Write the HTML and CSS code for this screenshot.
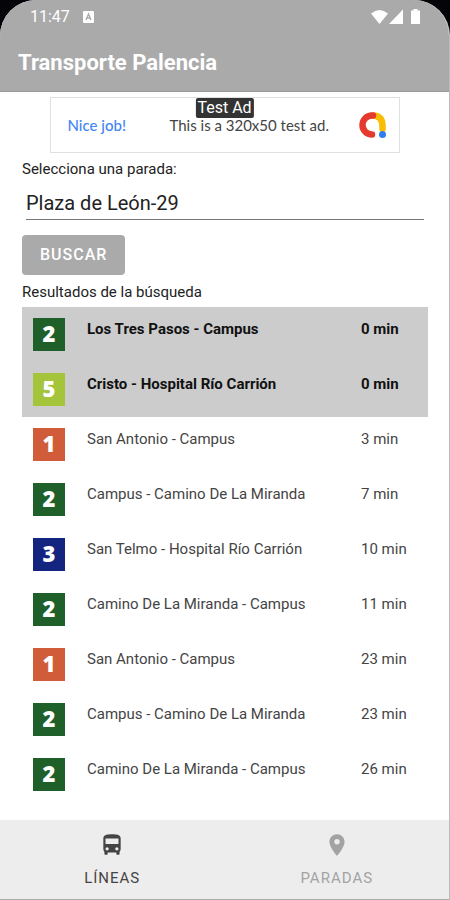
FILE: index.html
```html
<!DOCTYPE html>
<html lang="es">
<head>
<meta charset="utf-8">
<meta name="viewport" content="width=device-width, initial-scale=1">
<title>Transporte Palencia</title>
<link rel="stylesheet" href="styles.css">
</head>
<body>
<div class="app">
  <header class="header">
    <div class="status">
      <span class="clock">11:47</span>
      <svg class="notice" width="11" height="12" viewBox="0 0 11 12"><rect width="11" height="12" rx="1" fill="#fff"/><path d="M3 9l2.500-6L8 9M4 7h3" fill="none" stroke="#aaa" stroke-width="1.300"/></svg>
      <svg class="signals" width="50" height="16" viewBox="0 0 50 16" fill="#fff"><path d="M0 4.500Q8.500-2.500 17 4.500L8.500 15z"/><path d="M32 .5V15H18z"/><path d="M40 1.500h2.500V0h4v1.500H49V15h-9z"/></svg>
    </div>
    <h1 class="title">Transporte Palencia</h1>
  </header>
  <aside class="ad">
    <span class="ad-tag">Test Ad</span>
    <span class="ad-lead">Nice job!</span>
    <span class="ad-text">This is a 320x50 test ad.</span>
    <svg class="ad-logo" width="28" height="28" viewBox="0 0 28 28" fill="none" stroke-width="6.500" stroke-linecap="round"><path d="M13.500 4.500Q23.500 4.500 23.500 15V18" stroke="#fbbc04"/><path d="M14 4.500H13A9.500 9.500 0 0 0 13 23.500" stroke="#e53b2e"/><circle cx="23.500" cy="23.500" r="3.500" fill="#307df0"/></svg>
  </aside>
  <main class="main">
    <form class="search">
      <label class="label" for="stop">Selecciona una parada:</label>
      <input class="field" id="stop" type="text" value="Plaza de León-29">
      <button class="submit" type="button">BUSCAR</button>
    </form>
    <h2 class="label" id="results">Resultados de la búsqueda</h2>
    <table class="results" aria-labelledby="results">
      <tbody>
        <tr class="now"><td class="line"><span class="badge green">2</span></td><td>Los Tres Pasos - Campus</td><td class="time">0 min</td></tr>
        <tr class="now"><td class="line"><span class="badge lime">5</span></td><td>Cristo - Hospital Río Carrión</td><td class="time">0 min</td></tr>
        <tr><td class="line"><span class="badge orange">1</span></td><td>San Antonio - Campus</td><td class="time">3 min</td></tr>
        <tr><td class="line"><span class="badge green">2</span></td><td>Campus - Camino De La Miranda</td><td class="time">7 min</td></tr>
        <tr><td class="line"><span class="badge blue">3</span></td><td>San Telmo - Hospital Río Carrión</td><td class="time">10 min</td></tr>
        <tr><td class="line"><span class="badge green">2</span></td><td>Camino De La Miranda - Campus</td><td class="time">11 min</td></tr>
        <tr><td class="line"><span class="badge orange">1</span></td><td>San Antonio - Campus</td><td class="time">23 min</td></tr>
        <tr><td class="line"><span class="badge green">2</span></td><td>Campus - Camino De La Miranda</td><td class="time">23 min</td></tr>
        <tr><td class="line"><span class="badge green">2</span></td><td>Camino De La Miranda - Campus</td><td class="time">26 min</td></tr>
      </tbody>
    </table>
  </main>
  <nav class="tabs">
    <a class="tab active" href="#lineas">
      <svg width="26" height="26" viewBox="0 0 24 24" fill="currentColor"><path d="M4 16c0 .88.39 1.670 1 2.220V20c0 .55.45 1 1 1h1c.55 0 1-.45 1-1v-1h8v1c0 .55.45 1 1 1h1c.55 0 1-.45 1-1v-1.780c.61-.55 1-1.340 1-2.220V6c0-3.500-3.580-4-8-4s-8 .5-8 4v10zm3.500 1c-.83 0-1.500-.67-1.500-1.500S6.670 14 7.500 14s1.500.67 1.500 1.500S8.330 17 7.500 17zm9 0c-.83 0-1.500-.67-1.500-1.500s.67-1.500 1.500-1.500 1.500.67 1.500 1.500-.67 1.500-1.500 1.500zm1.500-6H6V6h12v5z"/></svg>
      <span>LÍNEAS</span>
    </a>
    <a class="tab" href="#paradas">
      <svg width="26" height="26" viewBox="0 0 24 24" fill="currentColor"><path d="M12 2C8.130 2 5 5.130 5 9c0 5.250 7 13 7 13s7-7.750 7-13c0-3.870-3.130-7-7-7zm0 9.500a2.500 2.500 0 0 1 0-5 2.500 2.500 0 0 1 0 5z"/></svg>
      <span>PARADAS</span>
    </a>
  </nav>
</div>
</body>
</html>
```
FILE: styles.css
```css
* {
  box-sizing: border-box;
}

body {
  margin: 0;
  background: #050509;
  font-family: Roboto, "Liberation Sans", sans-serif;
  color: #222;
}

.app {
  display: flex;
  flex-direction: column;
  min-height: 100vh;
  background: #fff;
  border-right: 1px solid #bbb;
  border-bottom: 1px solid #aaa;
  border-radius: 36px 36px 0 0;
  overflow: hidden;
}

.header {
  background: #aaa;
  border-bottom: 1px solid #999;
  color: #fff;
  padding: 8px 18px 14px;
}

.status {
  display: flex;
  align-items: center;
  height: 18px;
  padding: 0 10px 0 12px;
}

.clock {
  font-size: 16px;
  line-height: 18px;
}

.notice {
  margin-left: 13px;
}

.signals {
  margin-left: auto;
}

.title {
  margin: 23px 0 0;
  font-size: 22px;
  line-height: 28px;
  font-weight: 700;
}

.ad {
  position: relative;
  display: flex;
  align-items: center;
  align-self: center;
  width: 350px;
  height: 56px;
  margin-top: 5px;
  padding: 0 12px 0 17px;
  border: 1px solid #dde1e2;
  font-family: Lato, Roboto, sans-serif;
  font-size: 15px;
  line-height: 14px;
}

.ad-tag {
  position: absolute;
  top: 0;
  left: 50%;
  transform: translateX(-50%);
  padding: 0 2px;
  border-radius: 2px;
  background: #333;
  color: #fff;
  font-family: Roboto, sans-serif;
  font-size: 16px;
  line-height: 20px;
  white-space: nowrap;
}

.ad-lead {
  width: 102px;
  color: #4285f4;
  font-weight: 500;
}

.ad-text {
  color: #444;
}

.ad-logo {
  margin-left: auto;
}

.main {
  flex: 1;
  padding: 6px 21px 0 22px;
}

.search {
  display: flex;
  flex-direction: column;
  align-items: flex-start;
}

.label {
  margin: 0;
  font-size: 15px;
  line-height: 20px;
  font-weight: 400;
}

.field {
  align-self: stretch;
  height: 34px;
  margin: 7px 4px 0;
  padding: 0;
  border: 0;
  border-bottom: 1px solid #777;
  background: none;
  color: #222;
  font: 20px/32px Roboto, sans-serif;
  outline: none;
}

.submit {
  height: 40px;
  margin: 15px 0 7px;
  padding: 0 18px;
  border: 0;
  border-radius: 4px;
  background: #aaa;
  color: #fff;
  font: 500 16px/20px Roboto, sans-serif;
  letter-spacing: 1px;
}

.results {
  width: 100%;
  margin-top: 5px;
  border-collapse: collapse;
  font-size: 15px;
  line-height: 20px;
  color: #444;
}

.results tr {
  height: 55px;
}

.results td {
  padding: 12px 0 0;
  vertical-align: top;
}

.results .line {
  width: 65px;
  padding: 11px 0 0 11px;
}

.results .time {
  width: 67px;
}

.results .now {
  background: #ccc;
  color: #111;
  font-weight: 700;
}

.results .badge {
  display: block;
  width: 32px;
  height: 33px;
  color: #fff;
  font: 800 22px/30px "Open Sans", sans-serif;
  text-align: center;
}

.green {
  background: #1f602a;
}

.lime {
  background: #a4c43c;
}

.orange {
  background: #d05c3a;
}

.blue {
  background: #14257f;
}

.tabs {
  display: flex;
  height: 79px;
  background: #ededed;
}

.tab {
  flex: 1;
  display: flex;
  flex-direction: column;
  align-items: center;
  gap: 10px;
  padding-top: 12px;
  color: #a3a3a3;
  font-size: 15px;
  line-height: 20px;
  letter-spacing: 1px;
  text-decoration: none;
}

.tab.active {
  color: #444;
}
```
